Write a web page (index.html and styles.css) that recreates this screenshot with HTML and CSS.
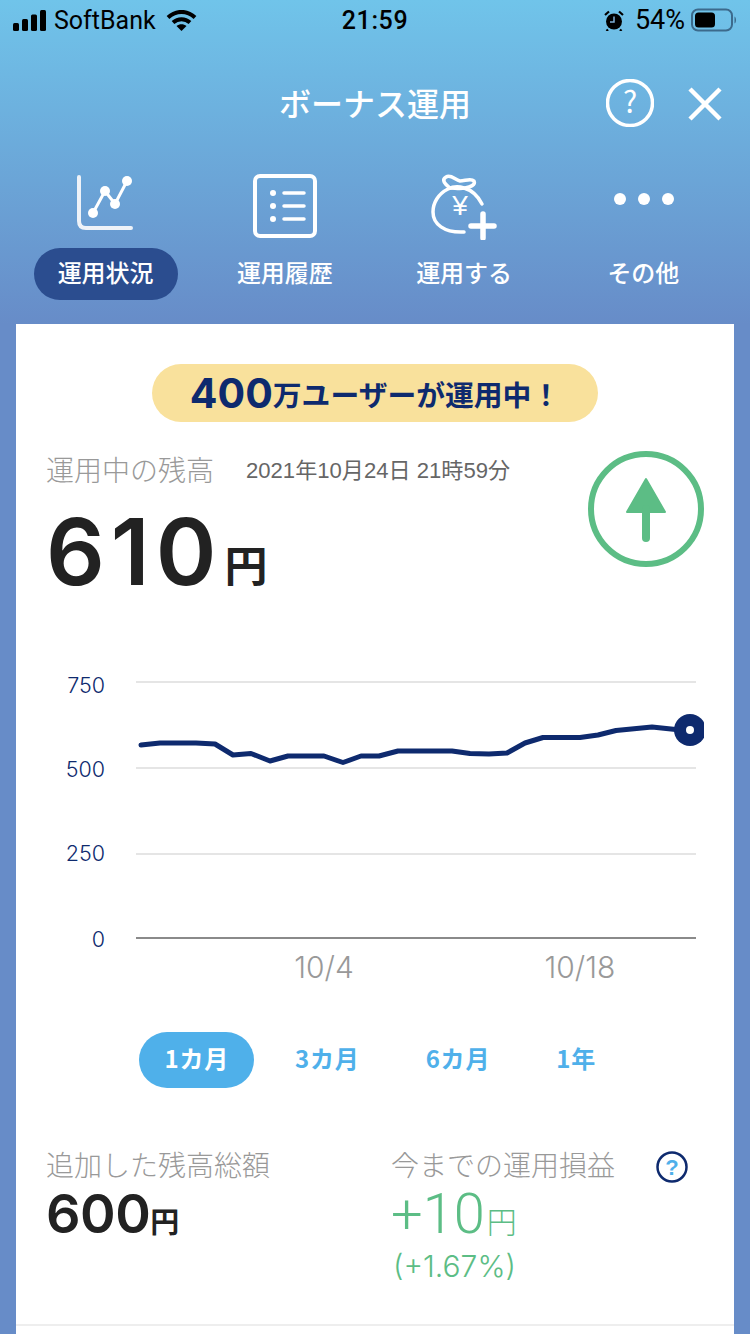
FILE: index.html
```html
<!DOCTYPE html>
<html lang="ja">
<head>
<meta charset="utf-8">
<title>ボーナス運用</title>
<link rel="stylesheet" href="styles.css">
</head>
<body>
<div class="app">
  <div class="status">
    <div class="status-left">
      <svg class="signal" width="33" height="21" viewBox="0 0 33 21"><rect x="0" y="13" width="6" height="8" rx="1.5"/><rect x="9" y="9" width="6" height="12" rx="1.5"/><rect x="18" y="4.500" width="6" height="16.500" rx="1.500"/><rect x="27" y="0" width="6" height="21" rx="1.500"/></svg>
      <span class="carrier">SoftBank</span>
      <svg class="wifi" width="31" height="21" viewBox="0 0 31 21"><path d="M2 7.500C10 0 21 0 29 7.500" fill="none" stroke="#000" stroke-width="4"/><path d="M7 12.500C12 8 19 8 24 12.500" fill="none" stroke="#000" stroke-width="4"/><path d="M10.500 16L15.500 21L20.500 16C17.500 13.500 13.500 13.500 10.500 16Z"/></svg>
    </div>
    <div class="time">21:59</div>
    <div class="status-right">
      <svg class="alarm" width="20" height="21" viewBox="0 0 20 21"><circle cx="10" cy="11.500" r="8"/><path d="M1 5L5 1.500M19 5L15 1.500M4 19.500L2.500 21M16 19.500L17.500 21" stroke="#000" stroke-width="2.200" fill="none"/><path d="M10 6.500V12H6" stroke="#7fb0d8" stroke-width="1.500" fill="none"/></svg>
      <span class="battery-pct">54%</span>
      <svg class="battery" width="46" height="24" viewBox="0 0 46 24"><rect x="1" y="1.500" width="40" height="21" rx="6" fill="none" stroke="#3c6a8c" stroke-width="2"/><rect x="4" y="4.500" width="20" height="15" rx="3.500" fill="#000"/><path d="M43.500 8.500C45.500 9.500 45.500 14.500 43.500 15.500Z" fill="#3c6a8c"/></svg>
    </div>
  </div>

  <header class="header">
    <div></div>
    <h1 class="title">ボーナス運用</h1>
    <div class="header-actions">
      <svg class="head-help" width="48" height="48" viewBox="0 0 48 48"><circle cx="24" cy="24" r="22.500" fill="none" stroke="#fff" stroke-width="3.500"/><text x="24" y="34" text-anchor="middle" class="head-help-mark">?</text></svg>
      <svg class="head-close" width="34" height="34" viewBox="0 0 34 34"><path d="M2 2L32 32M32 2L2 32" stroke="#fff" stroke-width="4.500" fill="none"/></svg>
    </div>
  </header>

  <nav class="tabs">
    <div class="tab">
      <svg class="tab-icon" width="72" height="72" viewBox="0 0 72 72"><path d="M9 9V53Q9 60 16 60H61" fill="none" stroke="#eef2f8" stroke-width="4" stroke-linecap="round"/><path d="M23 45L35 23L45 36L57 13" fill="none" stroke="#fff" stroke-width="3"/><circle cx="23" cy="45" r="5" fill="#fff"/><circle cx="35" cy="23" r="5" fill="#fff"/><circle cx="45" cy="36" r="5" fill="#fff"/><circle cx="57" cy="13" r="5" fill="#fff"/></svg>
      <span class="tab-label tab-label-active">運用状況</span>
    </div>
    <div class="tab">
      <svg class="tab-icon" width="72" height="72" viewBox="0 0 72 72"><rect x="6" y="8" width="60" height="60" rx="5" fill="none" stroke="#fff" stroke-width="4"/><circle cx="24" cy="25" r="3" fill="#fff"/><circle cx="24" cy="38" r="3" fill="#fff"/><circle cx="24" cy="51" r="3" fill="#fff"/><path d="M35 25H55M35 38H55M35 51H55" stroke="#fff" stroke-width="3.500" stroke-linecap="round"/></svg>
      <span class="tab-label">運用履歴</span>
    </div>
    <div class="tab">
      <svg class="tab-icon" width="72" height="72" viewBox="0 0 72 72"><path d="M54 36C50 28 43 22 36 20C30 18 24 19 20 21C10 26 5 35 5 44C5 56 16 65 36 64" fill="none" stroke="#fff" stroke-width="3.500" stroke-linecap="round"/><path d="M22 20C17 16 13 12 18 9C23 6 27 12 32 13C37 13 43 10 46 13C48 17 42 19 37 20C32 21 27 20 22 20Z" fill="none" stroke="#fff" stroke-width="3.500"/><text x="32" y="47" text-anchor="middle" class="yen">¥</text><path d="M43 58H66M55 46V70" stroke="#fff" stroke-width="5.500" stroke-linecap="round"/></svg>
      <span class="tab-label">運用する</span>
    </div>
    <div class="tab">
      <svg class="tab-icon" width="72" height="72" viewBox="0 0 72 72"><circle cx="13" cy="31" r="6" fill="#fff"/><circle cx="37" cy="31" r="6" fill="#fff"/><circle cx="61" cy="31" r="6" fill="#fff"/></svg>
      <span class="tab-label">その他</span>
    </div>
  </nav>

  <main class="card">
    <div class="banner-row">
      <div class="banner"><span class="banner-num">400</span>万ユーザーが運用中！</div>
    </div>

    <section class="balance">
      <div class="balance-main">
        <div class="balance-head">
          <span class="balance-label">運用中の残高</span>
          <span class="balance-date">2021年10月24日 21時59分</span>
        </div>
        <div class="balance-amount"><span class="balance-num">610</span><span class="balance-unit">円</span></div>
      </div>
      <svg class="trend" width="116" height="116" viewBox="0 0 116 116"><circle cx="58" cy="58" r="55" fill="none" stroke="#5cbd85" stroke-width="6"/><path d="M58 28L77 61H39Z" fill="#5cbd85" stroke="#5cbd85" stroke-width="2" stroke-linejoin="round"/><path d="M58 58V87" stroke="#5cbd85" stroke-width="8" stroke-linecap="round"/></svg>
    </section>

    <svg class="chart" width="718" height="340" viewBox="16 660 718 340">
      <defs><clipPath id="plot"><rect x="16" y="660" width="688" height="340"/></clipPath></defs>
      <path class="grid-line" d="M136 682H696M136 768H696M136 854H696"/>
      <path class="axis-line" d="M136 938H696"/>
      <text class="y-label" x="105" y="693" text-anchor="end">750</text>
      <text class="y-label" x="105" y="777" text-anchor="end">500</text>
      <text class="y-label" x="105" y="861" text-anchor="end">250</text>
      <text class="y-label" x="105" y="947" text-anchor="end">0</text>
      <text class="x-label" x="324" y="978" text-anchor="middle">10/4</text>
      <text class="x-label" x="580" y="978" text-anchor="middle">10/18</text>
      <path class="series" d="M141 745L160 743L196 743L215 744L233 755L251 753.500L270 761L288 756L324 756L343 762.500L361 756L379 756L398 751L452 751L470 753.500L489 754L507 753L525 743L543 737.500L580 737.500L598 735L616 730.500L652 727L690 731"/>
      <g clip-path="url(#plot)"><circle cx="690" cy="730" r="16" fill="#0e2a6e"/><circle cx="690" cy="730" r="4" fill="#fff"/></g>
    </svg>

    <div class="ranges">
      <span class="range range-active">1カ月</span>
      <span class="range">3カ月</span>
      <span class="range">6カ月</span>
      <span class="range">1年</span>
    </div>

    <section class="stats">
      <div class="stat">
        <div class="stat-label">追加した残高総額</div>
        <div class="stat-value"><span class="stat-num">600</span><span class="stat-unit">円</span></div>
      </div>
      <div class="stat">
        <div class="stat-head">
          <span class="stat-label">今までの運用損益</span>
          <svg class="stat-help" width="32" height="32" viewBox="0 0 32 32"><circle cx="16" cy="16" r="14.500" fill="#fff" stroke="#0e2a6e" stroke-width="2.500"/><text x="16" y="24" text-anchor="middle" class="stat-help-mark">?</text></svg>
        </div>
        <div class="stat-value stat-gain"><span class="gain-num">+10</span><span class="gain-unit">円</span></div>
        <div class="gain-pct">(+1.67%)</div>
      </div>
    </section>

    <div class="divider"></div>
  </main>
</div>
</body>
</html>
```
FILE: styles.css
```css
* { box-sizing: border-box; }
html, body { margin: 0; padding: 0; }
body {
  width: 750px;
  height: 1334px;
  overflow: hidden;
  font-family: "Liberation Sans", "Noto Sans CJK JP", sans-serif;
  background: #678cc8;
}
.app {
  width: 750px;
  height: 1334px;
  display: flex;
  flex-direction: column;
  background: linear-gradient(180deg, #70c4ea 0, #678cc8 324px, #678cc8 100%);
}

/* status bar */
.status {
  height: 40px;
  padding: 0 13px;
  display: grid;
  grid-template-columns: 1fr auto 1fr;
  align-items: center;
  color: #000;
  font-size: 25px;
}
.status-left, .status-right { display: flex; align-items: center; }
.status-right { justify-content: flex-end; }
.signal { margin-right: 8px; }
.carrier { margin-right: 10px; font-family: "Roboto", "Liberation Sans", sans-serif; }
.time { font-family: "Roboto", sans-serif; font-weight: 500; font-size: 25px; letter-spacing: 0.6px; }
.alarm { margin-right: 11px; }
.battery-pct { margin-right: 6px; font-family: "Roboto", "Liberation Sans", sans-serif; font-size: 27px; }

/* header */
.header {
  height: 128px;
  display: grid;
  grid-template-columns: 1fr auto 1fr;
  align-items: center;
}
.title {
  margin: 0;
  padding-bottom: 4px;
  color: #fff;
  font-family: "Noto Sans CJK JP", sans-serif;
  font-size: 32px;
  font-weight: 500;
}
.header-actions {
  display: flex;
  align-items: center;
  justify-content: flex-end;
  gap: 34px;
  padding-right: 28px;
}
.head-help { margin-bottom: 2px; }
.head-help-mark {
  fill: #fff;
  font-family: "Noto Sans CJK JP", sans-serif;
  font-size: 30px;
}

/* tabs */
.tabs {
  padding: 0 17px 0 16px;
  display: grid;
  grid-template-columns: repeat(4, 1fr);
}
.tab {
  display: flex;
  flex-direction: column;
  align-items: center;
}
.tab-icon { display: block; margin-bottom: 8px; }
.tab-label {
  width: 144px;
  height: 52px;
  padding-bottom: 5px;
  border-radius: 26px;
  display: flex;
  align-items: center;
  justify-content: center;
  color: #fff;
  font-family: "Noto Sans CJK JP", sans-serif;
  font-size: 24px;
  font-weight: 500;
}
.tab-label-active { background: #2b4d8f; }
.yen {
  fill: #fff;
  font-family: "Liberation Sans", sans-serif;
  font-size: 28px;
}

/* card */
.card {
  margin: 24px 16px 0;
  flex: 1;
  background: #fff;
  padding-top: 40px;
}
.banner-row { display: flex; justify-content: center; }
.banner {
  width: 446px;
  height: 58px;
  border-radius: 29px;
  background: #f9e19c;
  color: #0e2a6e;
  display: flex;
  align-items: center;
  justify-content: center;
  font-family: "Noto Sans CJK JP", sans-serif;
  font-size: 28.800px;
  font-weight: 700;
}
.banner-num {
  font-family: "Inter", sans-serif;
  font-size: 41px;
  font-weight: 700;
}

.balance {
  margin-top: 29px;
  padding: 0 30px;
  height: 147px;
  display: flex;
  justify-content: space-between;
  align-items: flex-start;
}
.balance-head { display: flex; align-items: center; height: 40px; padding-bottom: 4px; }
.balance-label {
  width: 200px;
  color: #999;
  font-family: "Noto Sans CJK JP", sans-serif;
  font-size: 28px;
  font-weight: 300;
}
.balance-date {
  margin-bottom: 2px;
  color: #666;
  font-family: "Liberation Sans", "Noto Sans CJK JP", sans-serif;
  font-size: 22.100px;
}
.balance-amount {
  height: 107px;
  padding-top: 7px;
  display: flex;
  align-items: baseline;
  color: #222;
}
.balance-num {
  font-family: "Inter", sans-serif;
  font-weight: 600;
  font-size: 92px;
  line-height: 107px;
  letter-spacing: 6px;
}
.balance-unit {
  margin-left: 2px;
  font-family: "Noto Sans CJK JP", sans-serif;
  font-size: 43px;
  font-weight: 700;
  transform: translateY(-3px);
}
.trend { display: block; flex: none; }

/* chart */
.chart { display: block; margin-top: 62px; }
.grid-line { stroke: #e5e5e5; stroke-width: 2; fill: none; }
.axis-line { stroke: #8a8a8a; stroke-width: 2; fill: none; }
.y-label { fill: #0e2a6e; font-family: "Inter", sans-serif; font-weight: 300; font-size: 21.500px; }
.x-label { fill: #999; font-family: "Inter", sans-serif; font-weight: 300; font-size: 30px; }
.series { fill: none; stroke: #0e2a6e; stroke-width: 5; stroke-linejoin: round; stroke-linecap: round; }

/* range */
.ranges {
  margin-top: 32px;
  margin-left: 123px;
  display: flex;
  gap: 16px;
}
.range {
  height: 56px;
  padding: 0 24.500px 5px 25.500px;
  border-radius: 28px;
  display: flex;
  align-items: center;
  color: #4fb0ea;
  font-family: "Noto Sans CJK JP", sans-serif;
  font-size: 24px;
  font-weight: 700;
  letter-spacing: 0.8px;
}
.range-active { background: #4fb0ea; color: #fff; }

/* stats */
.stats {
  margin-top: 61px;
  padding-left: 30px;
  height: 175px;
  display: grid;
  grid-template-columns: 345px 1fr;
}
.stat-head { display: flex; align-items: center; gap: 41px; height: 34px; }
.stat-label {
  display: block;
  height: 34px;
  line-height: 30px;
  color: #999;
  font-family: "Noto Sans CJK JP", sans-serif;
  font-size: 28px;
  font-weight: 300;
}
.stat-value { display: flex; align-items: baseline; height: 62px; line-height: 62px; color: #222; }
.stat-num { font-family: "Inter", sans-serif; font-weight: 600; font-size: 54px; letter-spacing: -0.5px; }
.stat-unit { font-family: "Noto Sans CJK JP", sans-serif; font-size: 29px; font-weight: 700; }
.stat-gain { color: #5cbd85; }
.gain-num { font-family: "Roboto", sans-serif; font-weight: 300; font-size: 56px; }
.gain-unit { margin-left: 2px; font-family: "Noto Sans CJK JP", sans-serif; font-size: 30px; font-weight: 300; }
.gain-pct {
  margin-top: 3px;
  margin-left: 2px;
  color: #5cbd85;
  font-family: "Inter", sans-serif;
  font-weight: 300;
  font-size: 30px;
}
.stat-help { display: block; margin-top: 2px; }
.stat-help-mark {
  fill: #4fb0ea;
  font-family: "Liberation Sans", sans-serif;
  font-weight: 700;
  font-size: 22px;
}
.divider { height: 2px; background: #eee; }
```
